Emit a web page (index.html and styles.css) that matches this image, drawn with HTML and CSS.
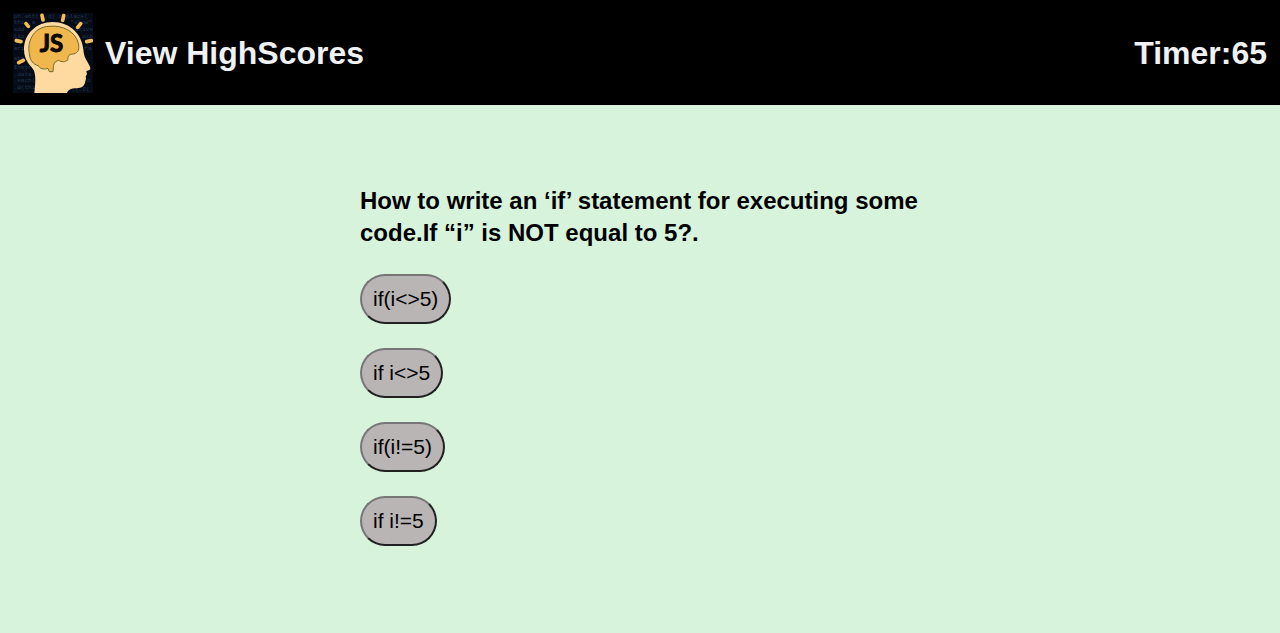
FILE: index.html
```html
<!DOCTYPE html>
<html lang="en">
<head>
<meta charset="utf-8">
<meta name="viewport" content="width=device-width, initial-scale=1">
<title>Code Quiz</title>
<link rel="stylesheet" href="styles.css">
</head>
<body>
<header class="header">
  <div class="brand">
    <svg class="logo" viewBox="0 0 240 240" aria-hidden="true">
      <rect width="240" height="240" fill="#050b17"/>
      <g class="logo-code">
        <text x="2" y="16">ph.abt(</text>
        <text x="94" y="16">,d).replace(</text>
        <text x="2" y="34">this.a</text>
        <text x="172" y="34">"show"</text>
        <text x="2" y="54">sdd</text>
        <text x="186" y="54">ctive</text>
        <text x="2" y="76">tio</text>
        <text x="208" y="76">a(b</text>
        <text x="2" y="112">ari</text>
        <text x="214" y="112">fa</text>
        <text x="2" y="140">ata</text>
        <text x="2" y="168">Instru</text>
        <text x="2" y="188">.data-</text>
        <text x="2" y="208">.each(</text>
        <text x="2" y="228">.d(thi</text>
        <text x="222" y="208">o</text>
        <text x="176" y="234">;(,D(</text>
      </g>
      <path d="M64 240C67 213 69 190 63 173C55 158 33 146 33 109C33 63 70 27 119 27C171 27 207 64 211 109C212 125 216 136 223 146C228 155 233 163 232 168C231 172 224 173 220 174L222 184L218 190L219 197C217 203 217 209 213 216C206 229 188 223 174 228C164 232 162 240 162 240Z" fill="#fed9a0"/>
      <path d="M49 122C41 78 68 41 108 40C150 35 188 57 196 91C200 108 196 119 182 123C168 123 164 129 165 140C155 149 147 147 136 142C124 146 123 153 121 161L120 176H109L105 166C92 171 79 166 76 158C61 155 51 142 49 122Z" fill="#f0b74e" stroke="#726b2a" stroke-width="3" stroke-linejoin="round"/>
      <path class="logo-rays" d="M39 32l7 8M87 7l3 14M152 8l-3 14M203 32l-9 11M221 86l14-3M10 83l14 3M17 149l14-7"/>
      <text class="logo-text" x="80" y="117">JS</text>
    </svg>
    <a class="scores" href="#highscores">View HighScores</a>
  </div>
  <div class="timer">Timer:<span>65</span></div>
</header>
<main class="quiz">
  <h1 class="question">How to write an ‘if’ statement for executing some code.If “i” is NOT equal to 5?.</h1>
  <div class="answers">
    <button class="answer" type="button">if(i&lt;&gt;5)</button>
    <button class="answer" type="button">if i&lt;&gt;5</button>
    <button class="answer" type="button">if(i!=5)</button>
    <button class="answer" type="button">if i!=5</button>
  </div>
</main>
</body>
</html>
```

FILE: styles.css
```css
* {
  box-sizing: border-box;
}

body {
  margin: 0;
  background: #d7f3dc;
  color: #000;
  font-family: "Liberation Sans", Arial, sans-serif;
}

.header {
  display: flex;
  align-items: center;
  justify-content: space-between;
  padding: 13px 13px 12px;
  background: #000;
  color: #eff1f3;
  font-size: 32px;
  font-weight: bold;
  line-height: 40px;
}

.brand {
  display: flex;
  align-items: center;
  gap: 12px;
}

.logo {
  display: block;
  width: 80px;
  height: 80px;
}

.logo-code {
  fill: #22364f;
  font: 18px "Liberation Mono", monospace;
}

.logo-rays {
  fill: none;
  stroke: #f2bd58;
  stroke-width: 11;
  stroke-linecap: round;
}

.logo-text {
  fill: #0b0a08;
  stroke: #0b0a08;
  stroke-width: 3;
  font: bold 72px Lato, sans-serif;
}

.scores {
  color: inherit;
  text-decoration: none;
}

.quiz {
  max-width: 560px;
  margin: 80px auto;
}

.question {
  margin: 0 0 25px;
  font-size: 24px;
  line-height: 32px;
}

.answers {
  display: flex;
  flex-direction: column;
  align-items: flex-start;
  gap: 24px;
}

.answer {
  height: 50px;
  padding: 0 11px;
  border: 2px solid;
  border-color: #767676 #212121 #212121 #767676;
  border-radius: 25px;
  background: #b8b5b4;
  color: #000;
  font-family: inherit;
  font-size: 21px;
  line-height: 24px;
}
```
